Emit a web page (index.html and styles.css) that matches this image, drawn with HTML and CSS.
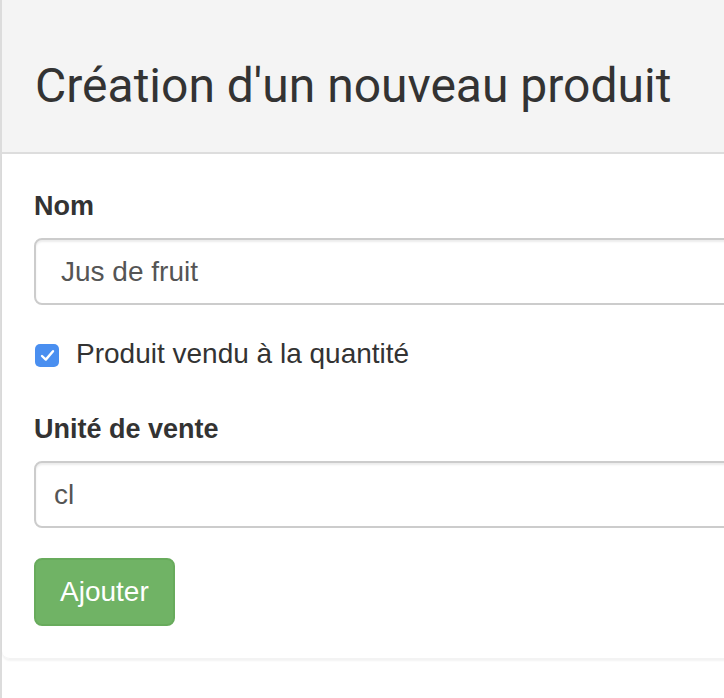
FILE: index.html
```html
<!DOCTYPE html>
<html lang="fr">
<head>
<meta charset="utf-8">
<title>Création d'un nouveau produit</title>
<link rel="stylesheet" href="styles.css">
</head>
<body>
<div class="panel">
  <div class="panel-heading">
    <h3 class="panel-title">Création d'un nouveau produit</h3>
  </div>
  <div class="panel-body">
    <form class="form">
      <div class="form-group">
        <label class="control-label">Nom</label>
        <div class="form-control form-control-wide">Jus de fruit</div>
      </div>
      <div class="checkbox">
        <span class="checkbox-box">
          <svg width="15" height="13" viewBox="0 0 15 13"><path d="M2 7 L5.8 10.6 L13 2.2" fill="none" stroke="#fff" stroke-width="2.4" stroke-linecap="round" stroke-linejoin="round"/></svg>
        </span>
        <span class="checkbox-label">Produit vendu à la quantité</span>
      </div>
      <div class="form-group">
        <label class="control-label">Unité de vente</label>
        <div class="form-control">cl</div>
      </div>
      <div class="actions">
        <button type="button" class="btn btn-success">Ajouter</button>
      </div>
    </form>
  </div>
  <div class="panel-footer-space"></div>
</div>
</body>
</html>
```

FILE: styles.css
```css
html, body {
  margin: 0;
  padding: 0;
  background: #fff;
  overflow: hidden;
}

body {
  width: 724px;
  height: 698px;
  font-family: "Liberation Sans", Arial, sans-serif;
  color: #333;
}

.panel {
  width: 960px;
  border: 2px solid #dcdcdc;
  border-top: none;
  border-radius: 0 0 8px 8px;
  box-sizing: border-box;
  background: #fff;
}

.panel-heading {
  background: #f4f4f4;
  border-bottom: 2px solid #dddddd;
  padding: 58px 32px 38px 33px;
}

.panel-title {
  margin: 0;
  font-family: Roboto, "Liberation Sans", sans-serif;
  font-weight: 400;
  font-size: 48px;
  line-height: 56px;
  color: #333;
}

.panel-body {
  padding: 32px 0 32px 32px;
  border-radius: 0 0 8px 8px;
  box-shadow: 0 2px 2px rgba(0, 0, 0, 0.05);
  border-bottom: 1px solid #f3f3f3;
}

.form-group {
  display: flex;
  flex-direction: column;
}

.control-label {
  font-weight: 700;
  font-size: 27px;
  line-height: 40px;
  margin-bottom: 12px;
  color: #333;
}

.form-control {
  height: 67px;
  box-sizing: border-box;
  border: 2px solid #cccccc;
  border-radius: 8px;
  box-shadow: inset 0 2px 2px rgba(0, 0, 0, 0.075);
  padding: 0 18px;
  display: flex;
  align-items: center;
  font-size: 28px;
  color: #555;
}

.form-control-wide {
  padding-left: 25px;
}

.checkbox {
  display: flex;
  align-items: center;
  height: 40px;
  margin: 29px 0 35px;
}

.checkbox-box {
  width: 24px;
  height: 23px;
  border-radius: 5px;
  background: #4a8ff0;
  display: flex;
  align-items: center;
  justify-content: center;
  margin-left: 1px;
  margin-right: 17px;
  margin-top: 2px;
}

.checkbox-box svg {
  display: block;
}

.checkbox-label {
  font-size: 28px;
  line-height: 40px;
  color: #333;
}

.actions {
  margin-top: 30px;
}

.btn {
  height: 68px;
  box-sizing: border-box;
  padding: 0 24px;
  border-radius: 8px;
  font-family: "Liberation Sans", Arial, sans-serif;
  font-size: 28px;
  line-height: 64px;
  cursor: pointer;
}

.btn-success {
  background: #70b365;
  border: 2px solid #68ab5c;
  color: #fff;
}

.panel-footer-space {
  height: 60px;
}
```
